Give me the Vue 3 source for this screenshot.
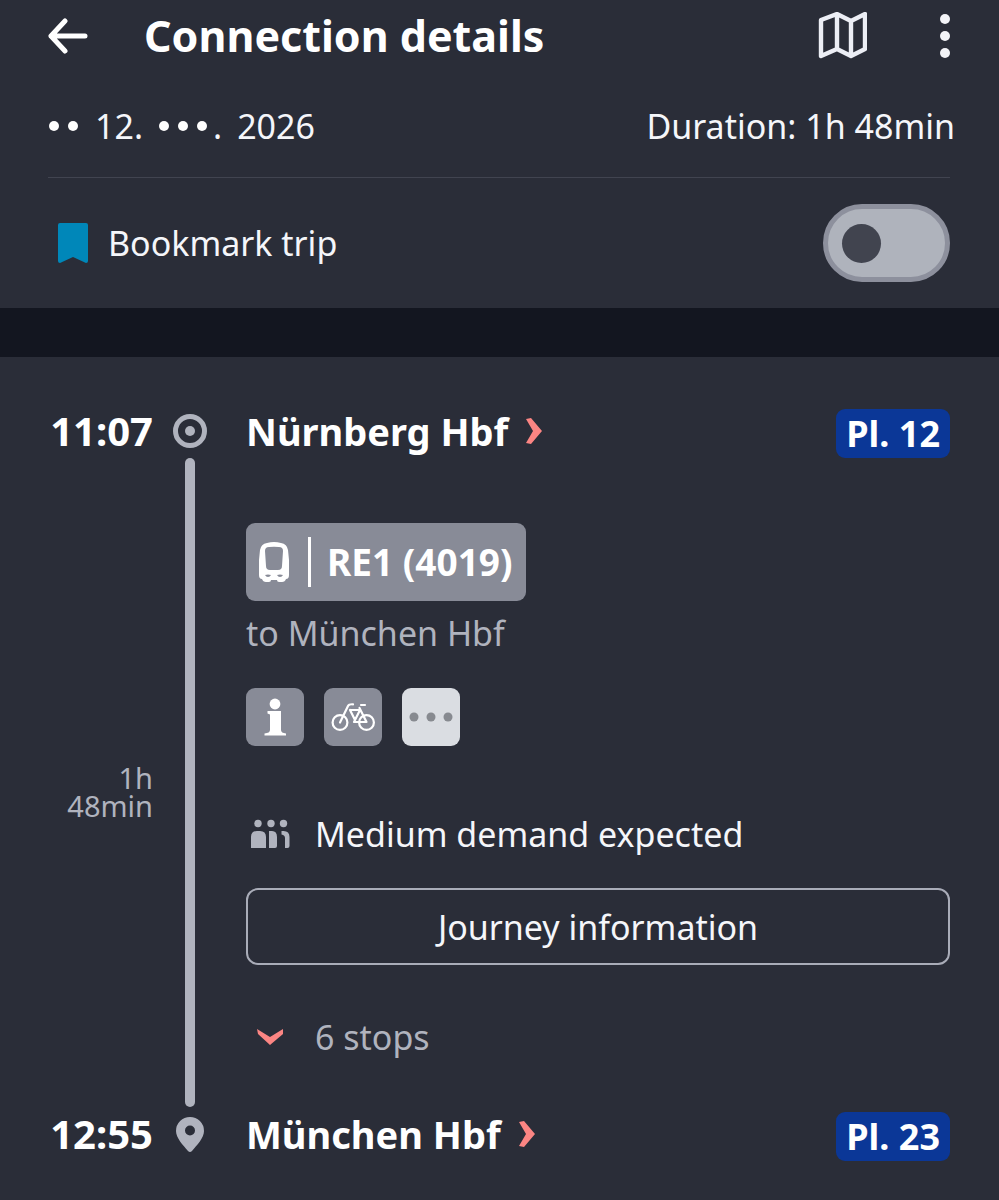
<script setup>
import { ref } from 'vue'

const bookmarked = ref(false)
</script>

<template>
  <main class="screen">
    <header class="head">
      <div class="bar">
        <button class="icon-btn" type="button" aria-label="Back">
          <svg width="40" height="36" viewBox="0 0 40 36">
            <path d="M17 3 3 18l14 15M3 18h34" fill="none" stroke="#fff" stroke-width="5" stroke-linecap="round" stroke-linejoin="round" />
          </svg>
        </button>
        <h1 class="title">Connection details</h1>
        <button class="icon-btn" type="button" aria-label="Map">
          <svg width="50" height="48" viewBox="0 0 50 48">
            <path d="M4 8 20 2l14 7 14-7v35l-14 7-14-7-16 7zM20 2v35M34 9v35" fill="none" stroke="#eceef5" stroke-width="4.4" stroke-linejoin="round" />
          </svg>
        </button>
        <button class="icon-btn more" type="button" aria-label="More options">
          <svg width="10" height="46" viewBox="0 0 10 46" fill="#f3f4f8">
            <circle cx="5" cy="6" r="5" />
            <circle cx="5" cy="23" r="5" />
            <circle cx="5" cy="40" r="5" />
          </svg>
        </button>
      </div>

      <div class="summary">
        <span class="date">
          <svg width="32" height="12" viewBox="0 0 32 12" fill="#fff" aria-hidden="true">
            <circle cx="6" cy="6" r="5" />
            <circle cx="25" cy="6" r="5" />
          </svg>
          <span>12.</span>
          <span class="month">
            <svg width="52" height="12" viewBox="0 0 52 12" fill="#fff" aria-hidden="true">
              <circle cx="6" cy="6" r="5" />
              <circle cx="25" cy="6" r="5" />
              <circle cx="44" cy="6" r="5" />
            </svg>.</span>
          <span>2026</span>
        </span>
        <span>Duration: 1h 48min</span>
      </div>

      <div class="bookmark">
        <svg width="30" height="40" viewBox="0 0 30 40">
          <path d="M2 0h26q2 0 2 2v36q0 2-2 2L15 34 2 40q-2 0-2-2V2q0-2 2-2z" fill="#0087b9" />
        </svg>
        <label class="bookmark-label" for="bookmark">Bookmark trip</label>
        <input id="bookmark" v-model="bookmarked" class="switch" type="checkbox" role="switch" />
      </div>
    </header>

    <section class="trip">
      <time class="time">11:07</time>
      <svg class="marker" width="34" height="34" viewBox="0 0 34 34">
        <circle cx="17" cy="17" r="14.5" fill="none" stroke="#b0b3be" stroke-width="5" />
        <circle cx="17" cy="17" r="5" fill="#b0b3be" />
      </svg>
      <div class="station">
        <a class="name" href="#nuernberg">Nürnberg Hbf
          <svg width="16" height="26" viewBox="0 0 16 26"><path d="M0 1 5 0l11 13L5 26l-5-1 7-12z" fill="#fb8583" /></svg>
        </a>
        <span class="platform">Pl. 12</span>
      </div>

      <div class="elapsed">1h<br />48min</div>
      <div class="rail"></div>
      <div class="leg">
        <a class="train" href="#re1">
          <svg width="30" height="40" viewBox="0 0 30 40">
            <path fill="#fff" fill-rule="evenodd" d="M8 1Q15-1 22 1q6 1 7 7l1 10v15q0 4-3 4-1 3-4 3h-3q-2 0-2-2h-6q0 2-2 2H7q-3 0-4-3-3 0-3-4V18L1 8q1-6 7-7zM10 5Q6 5 6 9l1 15q0 4 4 4h8q4 0 4-4l1-15q0-4-4-4-5-.6-10 0zM6 33q1 2 3 2t3-2q-3-1-6 0zM18 33q1 2 3 2t3-2q-3-1-6 0z" />
          </svg>
          <span class="separator"></span>
          <span>RE1 (4019)</span>
        </a>
        <p class="direction">to München Hbf</p>

        <div class="features">
          <button class="feature" type="button" aria-label="Information">
            <svg width="58" height="58" viewBox="0 0 58 58" fill="#fff">
              <circle cx="29" cy="16" r="5.4" />
              <path d="M21.5 23H35v19q0 3 5 3.500V47.500H18.500v-2Q24 45 24 42V26.500l-2.500-1z" />
            </svg>
          </button>
          <button class="feature" type="button" aria-label="Bicycles">
            <svg width="58" height="58" viewBox="0 0 58 58" fill="none" stroke="#fff" stroke-width="2.200" stroke-linecap="round" stroke-linejoin="round">
              <circle cx="16" cy="34.500" r="7.400" />
              <circle cx="42.500" cy="34.500" r="7.400" />
              <path d="M16 34.500 24 18q1-2 5-1.700M37 17h4M26 22h10l-6 12h12.500L35.500 20M26 22l5 10" />
            </svg>
          </button>
          <button class="feature light" type="button" aria-label="More features">
            <svg width="58" height="58" viewBox="0 0 58 58" fill="#878a90">
              <circle cx="12" cy="29" r="4.500" />
              <circle cx="29" cy="29" r="4.500" />
              <circle cx="46" cy="29" r="4.500" />
            </svg>
          </button>
        </div>

        <p class="demand">
          <svg width="40" height="30" viewBox="0 0 40 30" fill="#b0b3be">
            <circle cx="8" cy="4.500" r="3.700" />
            <circle cx="21" cy="4.500" r="3.700" />
            <circle cx="33.500" cy="4.500" r="3.700" />
            <path d="M1 29V18q0-6 6-6h3q6 0 6 6v11zM19 29V12h3q5 0 5 6v9q0 2-2 2zM31.500 12h2q6 0 6 6v9q0 2-2 2H35V19q0-3-3.500-3.500z" />
          </svg>
          <span>Medium demand expected</span>
        </p>

        <button class="journey" type="button">Journey information</button>

        <button class="stops" type="button">
          <span class="stops-icon">
            <svg width="26" height="16" viewBox="0 0 26 16"><path d="M0 0 13 8 26 0v5L13 16 1 5z" fill="#fb8583" /></svg>
          </span>
          <span>6 stops</span>
        </button>
      </div>

      <time class="time arrival">12:55</time>
      <svg class="marker pin" width="28" height="36" viewBox="0 0 28 36">
        <path fill="#b0b3be" fill-rule="evenodd" d="M14 0a14 14 0 0 1 14 14c0 7-7 14-12 20q-2 2-4 0C7 28 0 21 0 14A14 14 0 0 1 14 0zm0 8.500a5 5 0 1 0 0 10 5 5 0 0 0 0-10z" />
      </svg>
      <div class="station arrival">
        <a class="name" href="#muenchen">München Hbf
          <svg width="16" height="26" viewBox="0 0 16 26"><path d="M0 1 5 0l11 13L5 26l-5-1 7-12z" fill="#fb8583" /></svg>
        </a>
        <span class="platform">Pl. 23</span>
      </div>
    </section>
  </main>
</template>

<style>
body {
  margin: 0;
  background: #2a2d38;
}
</style>

<style scoped>
.screen {
  min-height: 100vh;
  background: #2a2d38;
  color: #f5f6fa;
  font-family: "Noto Sans", "Open Sans", sans-serif;
  font-size: 34px;
  line-height: 48px;
}
button {
  padding: 0;
  border: 0;
  background: none;
  color: inherit;
  font: inherit;
  cursor: pointer;
}
a {
  color: inherit;
  text-decoration: none;
}
p,
h1 {
  margin: 0;
}
svg {
  display: block;
  flex: none;
}
.head {
  padding: 0 49px 0 48px;
  border-bottom: 49px solid #131620;
}
.bar {
  display: flex;
  align-items: center;
  height: 72px;
}
.title {
  flex: 1;
  margin-left: 56px;
  color: #fff;
  font-size: 43px;
  font-weight: 700;
}
.more {
  margin-left: 73px;
}
.summary {
  display: flex;
  justify-content: space-between;
  margin-right: -5px;
  padding: 30px 0 27px;
}
.date,
.month {
  display: flex;
  align-items: center;
}
.date {
  gap: 15px;
}
.month {
  gap: 3px;
}
.bookmark {
  display: flex;
  align-items: center;
  height: 130px;
  padding-left: 10px;
  border-top: 1px solid #414450;
}
.bookmark-label {
  flex: 1;
  margin-left: 20px;
}
.switch {
  display: flex;
  align-items: center;
  box-sizing: border-box;
  width: 127px;
  height: 78px;
  margin: 0;
  padding: 0 14px;
  border: 5px solid #8d909d;
  border-radius: 39px;
  background: #afb3bc;
  appearance: none;
  cursor: pointer;
}
.switch::before {
  width: 39px;
  height: 39px;
  border-radius: 50%;
  background: #41444f;
  content: "";
}
.switch:checked {
  justify-content: flex-end;
}
.trip {
  display: grid;
  grid-template-columns: 105px 34px 1fr;
  column-gap: 20px;
  padding: 52px 49px 38px 48px;
}
.time {
  color: #fff;
  font-size: 40px;
  font-weight: 700;
  text-align: right;
  line-height: 44px;
}
.marker {
  margin-top: 5px;
  justify-self: center;
}
.station {
  display: flex;
  align-items: flex-start;
  justify-content: space-between;
  padding-left: 19px;
  color: #fff;
  font-weight: 700;
}
.name {
  display: flex;
  align-items: center;
  gap: 18px;
  font-size: 38px;
  line-height: 44px;
}
.platform {
  padding: 0 10px;
  border-radius: 9px;
  background: #0b3797;
  font-size: 36px;
  line-height: 49px;
}
.arrival {
  margin-top: 5px;
}
.pin {
  margin-top: 10px;
}
.elapsed {
  align-self: center;
  padding-top: 18px;
  color: #b0b3be;
  font-size: 29px;
  line-height: 28px;
  text-align: right;
}
.rail {
  width: 10px;
  border-radius: 5px;
  background: #b0b3be;
  justify-self: center;
}
.leg {
  padding: 65px 0 46px 19px;
}
.train {
  display: flex;
  align-items: center;
  width: fit-content;
  height: 78px;
  padding: 0 13px;
  border-radius: 9px;
  background: #888b97;
  color: #fff;
  font-size: 37px;
  font-weight: 700;
}
.separator {
  width: 3px;
  height: 50px;
  margin: 0 16px 0 19px;
  background: #fff;
}
.direction {
  margin-top: 8px;
  color: #b0b3be;
}
.features {
  display: flex;
  gap: 20px;
  margin-top: 31px;
}
.feature {
  border-radius: 9px;
  background: #888b97;
}
.light {
  background: #dadde2;
}
.demand {
  display: flex;
  align-items: center;
  gap: 25px;
  margin-top: 64px;
  padding-left: 4px;
}
.journey {
  display: block;
  width: 100%;
  margin-top: 30px;
  padding: 13px 0 12px;
  border: 2px solid #a9acb8;
  border-radius: 12px;
}
.stops {
  display: flex;
  align-items: center;
  gap: 25px;
  margin-top: 48px;
  padding-left: 4px;
  color: #b0b3be;
}
.stops-icon {
  display: flex;
  justify-content: center;
  width: 40px;
}
</style>
